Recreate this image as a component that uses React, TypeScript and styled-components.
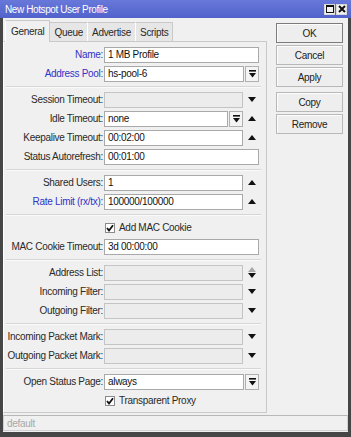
import styled, {createGlobalStyle, css} from 'styled-components';

const GlobalStyle = createGlobalStyle`
  html, body {
    margin: 0;
    padding: 0;
    background: #ffffff;
  }
`;

const colors = {
  frame: '#464646',
  face: '#f0f0f0',
  border: '#b4b4b4',
  light: '#c9c9c9',
  text: '#2a2a2a',
  blue: '#3232c8',
};

const Window = styled.div`
  width: 351px;
  height: 437px;
  display: flex;
  flex-direction: column;
  background: ${colors.frame};
  font-family: 'Liberation Sans', Arial, sans-serif;
  font-size: 10px;
  letter-spacing: -0.3px;
  color: ${colors.text};
`;

const TitleBar = styled.div`
  height: 18px;
  flex: none;
  display: flex;
  align-items: center;
  padding: 0 4px 0 5px;
  background: linear-gradient(to bottom, #6878da, #5163cb);
  color: #ffffff;
  letter-spacing: -0.4px;
`;

const TitleText = styled.span`
  flex: 1;
  padding-top: 1px;
`;

const TitleButton = styled.div`
  width: 11px;
  height: 11px;
  margin-left: 1px;
  display: flex;
  align-items: center;
  justify-content: center;
  background: #f2f2f2;
  border: 1px solid #d8d8d8;
  box-sizing: border-box;
`;

const Client = styled.div`
  flex: 1;
  margin: 0 3px 5px;
  background: ${colors.face};
  display: flex;
  flex-direction: column;
`;

const Main = styled.div`
  flex: 1;
  display: flex;
`;

const LeftCol = styled.div`
  width: 264px;
  display: flex;
  flex-direction: column;
`;

const TabStrip = styled.div`
  height: 23px;
  display: flex;
  align-items: flex-end;
  padding-left: 2px;
`;

const Tab = styled.div<{$active?: boolean}>`
  ${({$active}) => css`
    height: 18px;
    padding: 0 4px;
    display: flex;
    align-items: center;
    border: 1px solid ${colors.light};
    border-bottom: none;
    border-left-color: #ffffff;
    background: #e6e6e6;
    margin-right: -1px;

    ${$active &&
    css`
      height: 21px;
      padding: 0 5px;
      background: ${colors.face};
      margin-bottom: -1px;
      position: relative;
      z-index: 1;
    `}
  `};
`;

const Panel = styled.div`
  flex: 1;
  border: 1px solid ${colors.light};
  border-left-color: #ffffff;
  padding-top: 3px;
  overflow: hidden;
`;

const Row = styled.div`
  height: 19px;
  display: flex;
  align-items: center;
`;

const Label = styled.div<{$blue?: boolean}>`
  ${({$blue}) => css`
    width: 99px;
    flex: none;
    display: flex;
    justify-content: flex-end;
    white-space: nowrap;
    margin-right: 1px;
    color: ${$blue ? colors.blue : colors.text};
  `};
`;

const FieldBox = styled.div`
  width: 155px;
  display: flex;
  align-items: center;
`;

const TextBox = styled.div<{$disabled?: boolean}>`
  ${({$disabled}) => css`
    flex: 1;
    height: 16px;
    box-sizing: border-box;
    display: flex;
    align-items: center;
    padding-left: 3px;
    border: 1px solid ${$disabled ? '#c4c4c4' : '#a9a9a9'};
    background: ${$disabled ? '#ececec' : '#ffffff'};
    color: #111111;
    white-space: nowrap;
  `};
`;

const DropButton = styled.div`
  width: 14px;
  height: 16px;
  margin-left: 1px;
  box-sizing: border-box;
  display: flex;
  align-items: center;
  justify-content: center;
  border: 1px solid #b0b0b0;
  background: #f4f4f4;
`;

const SideArrow = styled.div`
  width: 16px;
  flex: none;
  display: flex;
  flex-direction: column;
  align-items: center;
  justify-content: center;
  gap: 1px;
  padding-left: 1px;
  box-sizing: border-box;
`;

const Separator = styled.div`
  height: 7px;
  display: flex;
  align-items: center;
  padding: 0 5px 0 2px;

  &::before {
    content: '';
    flex: 1;
    height: 1px;
    background: #d6d6d6;
    box-shadow: 0 1px 0 #fafafa;
  }
`;

const CheckRow = styled(Row)`
  padding-left: 101px;
  gap: 4px;
`;

const CheckBox = styled.div`
  width: 10px;
  height: 10px;
  box-sizing: border-box;
  border: 1px solid #8a8a8a;
  background: #ffffff;
  display: flex;
  align-items: center;
  justify-content: center;
`;

const ButtonCol = styled.div`
  width: 67px;
  margin-left: 9px;
  padding-top: 5px;
  display: flex;
  flex-direction: column;
  gap: 2px;
`;

const Button = styled.div<{$default?: boolean; $gapBefore?: boolean}>`
  ${({$default, $gapBefore}) => css`
    height: 20px;
    box-sizing: border-box;
    display: flex;
    align-items: center;
    justify-content: center;
    background: #eeeeee;
    border: 1px solid ${$default ? '#7c7c7c' : '#b8b8b8'};
    box-shadow: inset 1px 1px 0 #fdfdfd;
    color: #222222;

    ${$gapBefore &&
    css`
      margin-top: 3px;
    `}
  `};
`;

const StatusBar = styled.div`
  height: 16px;
  margin: 2px 0 1px;
  box-sizing: border-box;
  border: 1px solid #d0d0d0;
  border-top-color: #b8b8b8;
  display: flex;
  align-items: center;
  padding-left: 3px;
  color: #a8a8a8;
`;

const DropGlyph = () => (
  <svg width="7" height="8" viewBox="0 0 7 8">
    <rect x="0" y="0" width="7" height="1.6" fill="#111" />
    <polygon points="0,3 7,3 3.5,7.5" fill="#111" />
  </svg>
);

const ArrowDown = ({color = '#111'}: {color?: string}) => (
  <svg width="8" height="5" viewBox="0 0 8 5">
    <polygon points="0,0 8,0 4,5" fill={color} />
  </svg>
);

const ArrowUp = ({color = '#111'}: {color?: string}) => (
  <svg width="8" height="5" viewBox="0 0 8 5">
    <polygon points="0,5 8,5 4,0" fill={color} />
  </svg>
);

const CheckMark = () => (
  <svg width="8" height="8" viewBox="0 0 8 8">
    <polyline points="1,4 3,6.5 7,1.2" fill="none" stroke="#111" strokeWidth="1.8" />
  </svg>
);

type Side = 'down' | 'up' | 'updown';

interface FieldProps {
  label: string;
  value?: string;
  blue?: boolean;
  disabled?: boolean;
  drop?: boolean;
  side?: Side;
}

const Field = ({label, value, blue, disabled, drop, side}: FieldProps) => (
  <Row>
    <Label $blue={blue}>{label}:</Label>
    <FieldBox>
      <TextBox $disabled={disabled}>{value}</TextBox>
      {drop && (
        <DropButton>
          <DropGlyph />
        </DropButton>
      )}
      {side && (
        <SideArrow>
          {side === 'down' && <ArrowDown />}
          {side === 'up' && <ArrowUp />}
          {side === 'updown' && (
            <>
              <ArrowUp color="#a8a8a8" />
              <ArrowDown />
            </>
          )}
        </SideArrow>
      )}
    </FieldBox>
  </Row>
);

const Check = ({label}: {label: string}) => (
  <CheckRow>
    <CheckBox>
      <CheckMark />
    </CheckBox>
    <span>{label}</span>
  </CheckRow>
);

const App = () => {
  return (
    <>
      <GlobalStyle />
      <Window>
        <TitleBar>
          <TitleText>New Hotspot User Profile</TitleText>
          <TitleButton>
            <svg width="8" height="8" viewBox="0 0 8 8">
              <rect x="0.5" y="0.5" width="7" height="7" fill="none" stroke="#111" />
              <rect x="0" y="0" width="8" height="2" fill="#111" />
            </svg>
          </TitleButton>
          <TitleButton>
            <svg width="8" height="8" viewBox="0 0 8 8">
              <path d="M1 1 L7 7 M7 1 L1 7" stroke="#111" strokeWidth="2" />
            </svg>
          </TitleButton>
        </TitleBar>
        <Client>
          <Main>
            <LeftCol>
              <TabStrip>
                <Tab $active>General</Tab>
                <Tab>Queue</Tab>
                <Tab>Advertise</Tab>
                <Tab>Scripts</Tab>
              </TabStrip>
              <Panel>
                <Field label="Name" value="1 MB Profile" blue />
                <Field label="Address Pool" value="hs-pool-6" blue drop />
                <Separator />
                <Field label="Session Timeout" disabled side="down" />
                <Field label="Idle Timeout" value="none" drop side="up" />
                <Field label="Keepalive Timeout" value="00:02:00" side="up" />
                <Field label="Status Autorefresh" value="00:01:00" />
                <Separator />
                <Field label="Shared Users" value="1" side="up" />
                <Field label="Rate Limit (rx/tx)" value="100000/100000" blue side="up" />
                <Separator />
                <Check label="Add MAC Cookie" />
                <Field label="MAC Cookie Timeout" value="3d 00:00:00" />
                <Separator />
                <Field label="Address List" disabled side="updown" />
                <Field label="Incoming Filter" disabled side="down" />
                <Field label="Outgoing Filter" disabled side="down" />
                <Separator />
                <Field label="Incoming Packet Mark" disabled side="down" />
                <Field label="Outgoing Packet Mark" disabled side="down" />
                <Separator />
                <Field label="Open Status Page" value="always" drop />
                <Check label="Transparent Proxy" />
              </Panel>
            </LeftCol>
            <ButtonCol>
              <Button $default>OK</Button>
              <Button>Cancel</Button>
              <Button>Apply</Button>
              <Button $gapBefore>Copy</Button>
              <Button>Remove</Button>
            </ButtonCol>
          </Main>
          <StatusBar>default</StatusBar>
        </Client>
      </Window>
    </>
  );
};

export default App;
